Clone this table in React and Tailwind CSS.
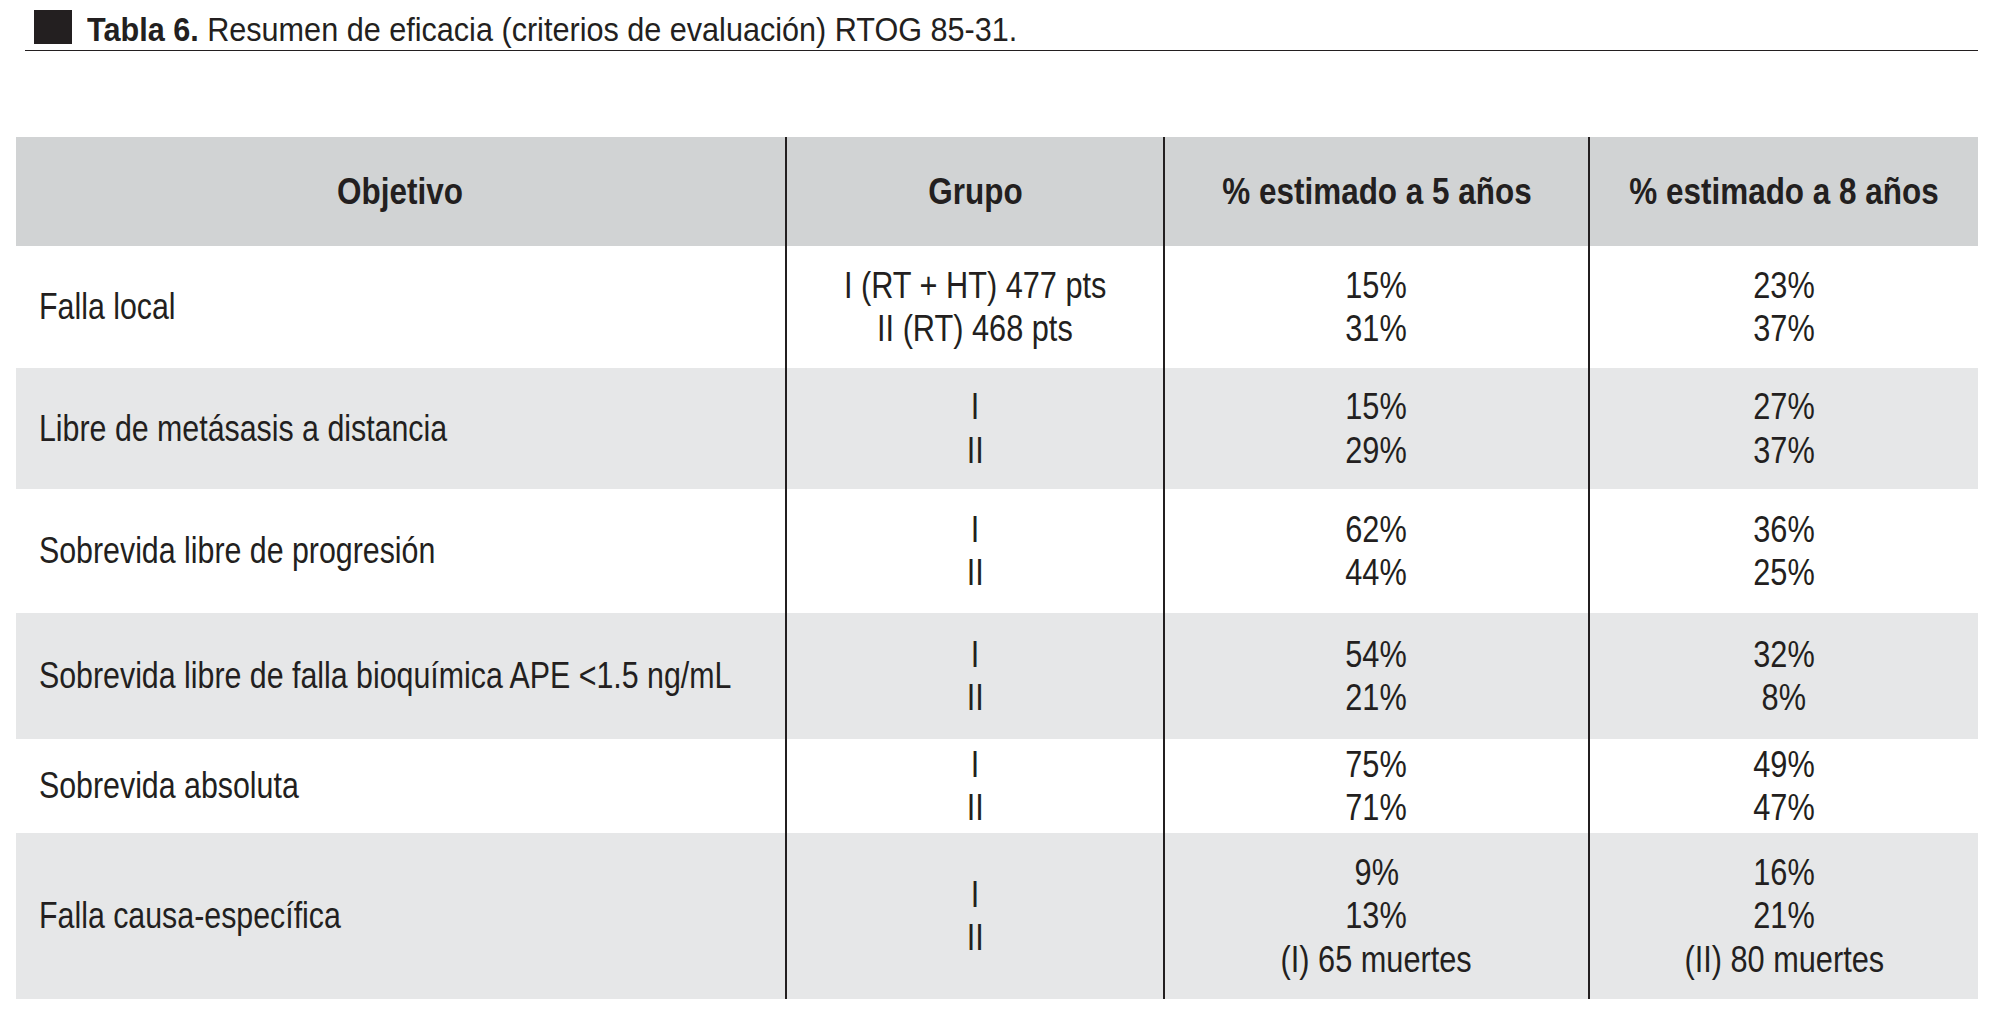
import React from "react";

const rows = [
  {
    obj: "Falla local",
    grp: ["I (RT + HT) 477 pts", "II (RT) 468 pts"],
    p5: ["15%", "31%"],
    p8: ["23%", "37%"],
    cls: "h-[122px] bg-white",
  },
  {
    obj: "Libre de metásasis a distancia",
    grp: ["I", "II"],
    p5: ["15%", "29%"],
    p8: ["27%", "37%"],
    cls: "h-[121px] bg-[#e6e7e8]",
  },
  {
    obj: "Sobrevida libre de progresión",
    grp: ["I", "II"],
    p5: ["62%", "44%"],
    p8: ["36%", "25%"],
    cls: "h-[124px] bg-white",
  },
  {
    obj: "Sobrevida libre de falla bioquímica APE <1.5 ng/mL",
    grp: ["I", "II"],
    p5: ["54%", "21%"],
    p8: ["32%", "8%"],
    cls: "h-[126px] bg-[#e6e7e8]",
  },
  {
    obj: "Sobrevida absoluta",
    grp: ["I", "II"],
    p5: ["75%", "71%"],
    p8: ["49%", "47%"],
    cls: "h-[94px] bg-white",
  },
  {
    obj: "Falla causa-específica",
    grp: ["I", "II"],
    p5: ["9%", "13%", "(I) 65 muertes"],
    p8: ["16%", "21%", "(II) 80 muertes"],
    cls: "h-[166px] bg-[#e6e7e8]",
  },
];

const font = {
  fontFamily: '"Liberation Sans", Arial, sans-serif',
};

function Lines({ items }) {
  return items.map((t, i) => (
    <div key={i} className="whitespace-nowrap">
      <span className="inline-block scale-x-[0.83]">{t}</span>
    </div>
  ));
}

function Head({ children }) {
  return <span className="inline-block whitespace-nowrap scale-x-[0.85]">{children}</span>;
}

export default function App() {
  return (
    <div className="w-[1995px] h-[1025px] bg-white text-[#231f20]" style={font}>
      <div className="pt-[10px]">
        <div className="ml-[25px] w-[1953px] h-[41px] border-b border-[#231f20] flex items-start">
          <div className="ml-[9px] w-[38px] h-[34px] bg-[#231f20]" />
          <div className="ml-[15px] mt-[2px] text-[34px] leading-[34px] whitespace-nowrap">
            <span className="inline-block origin-left scale-x-[0.9]">
              <span className="font-bold">Tabla 6.</span> Resumen de eficacia (criterios de evaluación) RTOG 85-31.
            </span>
          </div>
        </div>
      </div>

      <div className="mt-[86px] ml-[16px] w-[1962px]">
        <div className="grid grid-cols-[769px_378px_425px_390px] h-[109px] bg-[#d1d3d4] text-[37px] font-bold">
          <div className="flex items-center justify-center"><Head>Objetivo</Head></div>
          <div className="flex items-center justify-center border-l-2 border-[#231f20]"><Head>Grupo</Head></div>
          <div className="flex items-center justify-center border-l-2 border-[#231f20]"><Head>% estimado a 5 años</Head></div>
          <div className="flex items-center justify-center border-l-2 border-[#231f20]"><Head>% estimado a 8 años</Head></div>
        </div>
        {rows.map((r, i) => (
          <div
            key={i}
            className={`grid grid-cols-[769px_378px_425px_390px] text-[37px] leading-[43.5px] ${r.cls}`}
          >
            <div className="flex items-center pl-[23px] whitespace-nowrap">
              <span className="inline-block origin-left scale-x-[0.82]">{r.obj}</span>
            </div>
            <div className="flex flex-col items-center justify-center border-l-2 border-[#231f20]">
              <Lines items={r.grp} />
            </div>
            <div className="flex flex-col items-center justify-center border-l-2 border-[#231f20]">
              <Lines items={r.p5} />
            </div>
            <div className="flex flex-col items-center justify-center border-l-2 border-[#231f20]">
              <Lines items={r.p8} />
            </div>
          </div>
        ))}
      </div>
    </div>
  );
}
